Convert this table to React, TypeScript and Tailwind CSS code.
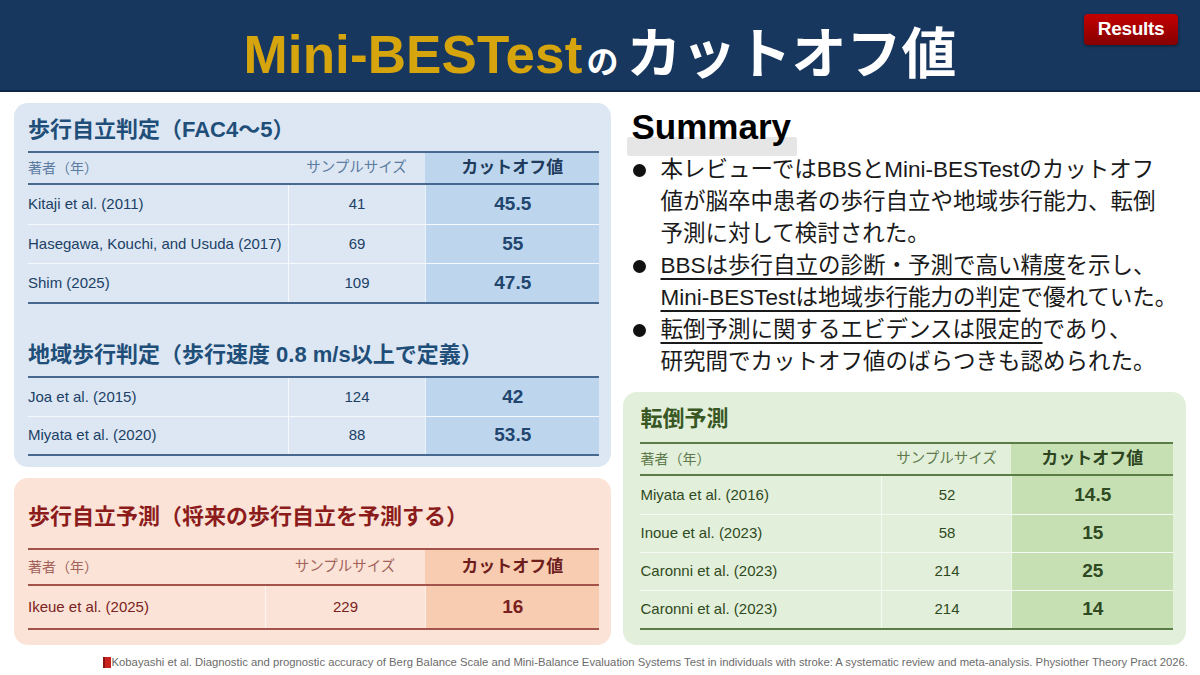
import React from 'react';

type Theme = {
  border: string;
  cut: string;
  text: string;
  head: string;
  headCut: string;
  val: string;
};

const BLUE: Theme = {
  border: 'border-[#47698f]',
  cut: 'bg-[#bdd6ee]',
  text: 'text-[#203f66]',
  head: 'text-[#5b7ba1]',
  headCut: 'text-[#1e3a5c]',
  val: 'text-[#22456e]',
};

const ORANGE: Theme = {
  border: 'border-[#a3534a]',
  cut: 'bg-[#f8ccb0]',
  text: 'text-[#7a2222]',
  head: 'text-[#a2625a]',
  headCut: 'text-[#6e1d1d]',
  val: 'text-[#7a1f1f]',
};

const GREEN: Theme = {
  border: 'border-[#5a7d45]',
  cut: 'bg-[#c6e0b4]',
  text: 'text-[#2f4a22]',
  head: 'text-[#5e7a4c]',
  headCut: 'text-[#2c4420]',
  val: 'text-[#2f4a22]',
};

const FONT = { fontFamily: '"Liberation Sans", "Noto Sans CJK JP", sans-serif' };
const JP = { fontFamily: '"Noto Sans CJK JP", sans-serif' };

type Row = [string, string, string];

interface TableProps {
  theme: Theme;
  widths: [string, string];
  header?: boolean;
  headH?: string;
  rowH: string;
  rows: Row[];
}

const DataTable: React.FC<TableProps> = ({ theme, widths, header, headH, rowH, rows }) => (
  <div className={`border-t-2 border-b-2 ${theme.border}`} style={FONT}>
    {header && (
      <div className={`flex ${headH} border-b-2 ${theme.border}`}>
        <div className={`${widths[0]} flex items-center text-[14px] ${theme.head}`}>著者（年）</div>
        <div className={`${widths[1]} flex items-center justify-center text-[14.5px] ${theme.head}`}>サンプルサイズ</div>
        <div className={`flex-1 flex items-center justify-center ${theme.cut} text-[17px] font-bold ${theme.headCut}`}>カットオフ値</div>
      </div>
    )}
    {rows.map((r, i) => (
      <div key={i} className={`flex ${rowH} ${i > 0 ? 'border-t border-white/70' : ''}`}>
        <div className={`${widths[0]} flex items-center text-[15px] ${theme.text}`}>{r[0]}</div>
        <div className={`${widths[1]} flex items-center justify-center border-l border-white/70 text-[15px] ${theme.text}`}>{r[1]}</div>
        <div className={`flex-1 flex items-center justify-center border-l border-white/70 ${theme.cut} text-[19px] font-bold ${theme.val}`}>{r[2]}</div>
      </div>
    ))}
  </div>
);

const Bullet: React.FC<{ children: React.ReactNode }> = ({ children }) => (
  <li className="flex">
    <div className="w-[37px] h-[32px] flex items-center pl-[10px] shrink-0">
      <div className="w-[13px] h-[13px] rounded-full bg-[#111]" />
    </div>
    <div className="whitespace-nowrap">{children}</div>
  </li>
);

const U: React.FC<{ children: React.ReactNode }> = ({ children }) => (
  <span className="underline decoration-[1.5px] underline-offset-[5px]">{children}</span>
);

export default function App() {
  return (
    <div className="w-[1200px] h-[675px] bg-white overflow-hidden relative" style={FONT}>
      {/* Header */}
      <header className="relative h-[92px] bg-[#17375e] border-b-2 border-[#0e2646] flex items-center justify-center">
        <h1 className="flex items-baseline pt-[12px] leading-none">
          <span className="text-[53px] font-bold text-[#d6a40c] tracking-[0.1px]" style={{ fontFamily: '"Liberation Sans", sans-serif' }}>
            Mini-BESTest
          </span>
          <span className="text-[32px] font-bold text-white ml-[4px]" style={JP}>の</span>
          <span className="text-[55px] font-bold text-white ml-[8px]" style={JP}>カットオフ値</span>
        </h1>
        <div className="absolute right-[22px] top-[14px] w-[94px] h-[31px] rounded-[4px] bg-gradient-to-b from-[#c40000] to-[#850000] shadow-[0_1px_3px_rgba(0,0,0,0.5)] flex items-center justify-center">
          <span className="text-[19px] font-bold text-white tracking-[-0.3px]">Results</span>
        </div>
      </header>

      {/* Body */}
      <div className="flex px-[14px] pt-[11px] gap-[12px]">
        {/* Left column */}
        <div className="w-[598px] flex flex-col gap-[11px]">
          <section className="h-[364px] rounded-[14px] bg-[#dce7f3] pl-[14px] pr-[12px] pt-[11px]">
            <h2 className="h-[32px] leading-[32px] text-[22px] font-bold text-[#1f4e79] mb-[5px]">歩行自立判定（FAC4〜5）</h2>
            <DataTable
              theme={BLUE}
              widths={['w-[260px]', 'w-[137px]']}
              header
              headH="h-[32px]"
              rowH="h-[39px]"
              rows={[
                ['Kitaji et al. (2011)', '41', '45.5'],
                ['Hasegawa, Kouchi, and Usuda (2017)', '69', '55'],
                ['Shim (2025)', '109', '47.5'],
              ]}
            />
            <h2 className="h-[32px] leading-[32px] text-[22px] font-bold text-[#1f4e79] mt-[35px] mb-[5px]">
              地域歩行判定（歩行速度 0.8 m/s以上で定義）
            </h2>
            <DataTable
              theme={BLUE}
              widths={['w-[260px]', 'w-[137px]']}
              rowH="h-[38px]"
              rows={[
                ['Joa et al. (2015)', '124', '42'],
                ['Miyata et al. (2020)', '88', '53.5'],
              ]}
            />
          </section>

          <section className="h-[167px] rounded-[14px] bg-[#fbe4d7] pl-[14px] pr-[12px] pt-[23px]">
            <h2 className="h-[32px] leading-[32px] text-[22px] font-bold text-[#8c1c1c] mb-[15px]">
              歩行自立予測（将来の歩行自立を予測する）
            </h2>
            <DataTable
              theme={ORANGE}
              widths={['w-[237px]', 'w-[160px]']}
              header
              headH="h-[36px]"
              rowH="h-[42px]"
              rows={[['Ikeue et al. (2025)', '229', '16']]}
            />
          </section>
        </div>

        {/* Right column */}
        <div className="w-[563px] flex flex-col">
          <div className="h-[51px] pl-[8px] flex items-end">
            <h2 className="relative inline-block text-[35px] font-bold leading-[44px] text-black mb-[5px]">
              <span className="absolute left-[-4px] right-[-6px] bottom-[-7px] h-[19px] bg-[#e6e6e6] rounded-[2px]" />
              <span className="relative">Summary</span>
            </h2>
          </div>
          <ul className="text-[22.5px] leading-[32px] text-[#1a1a1a]">
            <Bullet>
              本レビューではBBSとMini-BESTestのカットオフ<br />
              値が脳卒中患者の歩行自立や地域歩行能力、転倒<br />
              予測に対して検討された。
            </Bullet>
            <Bullet>
              <U>BBSは歩行自立の診断・予測で高い精度</U>を示し、<br />
              <U>Mini-BESTestは地域歩行能力の判定</U>で優れていた。
            </Bullet>
            <Bullet>
              <U>転倒予測に関するエビデンスは限定的</U>であり、<br />
              研究間でカットオフ値のばらつきも認められた。
            </Bullet>
          </ul>

          <section className="mt-[14px] h-[253px] rounded-[14px] bg-[#e2efda] pl-[17px] pr-[13px] pt-[11px]">
            <h2 className="h-[32px] leading-[32px] text-[22px] font-bold text-[#385723] mb-[7px]">転倒予測</h2>
            <DataTable
              theme={GREEN}
              widths={['w-[241px]', 'w-[130px]']}
              header
              headH="h-[32px]"
              rowH="h-[38px]"
              rows={[
                ['Miyata et al. (2016)', '52', '14.5'],
                ['Inoue et al. (2023)', '58', '15'],
                ['Caronni et al. (2023)', '214', '25'],
                ['Caronni et al. (2023)', '214', '14'],
              ]}
            />
          </section>
        </div>
      </div>

      {/* Footer reference */}
      <div className="mt-[9px] pr-[12px] flex justify-end items-center whitespace-nowrap text-[11.3px] text-[#6b6b6b]">
        <svg width="8" height="11" viewBox="0 0 8 11" className="mr-[1px]">
          <rect x="0" y="0" width="8" height="11" fill="#c9211e" />
          <rect x="0" y="0" width="2" height="11" fill="#8e1512" />
        </svg>
        <span>
          Kobayashi et al. Diagnostic and prognostic accuracy of Berg Balance Scale and Mini-Balance Evaluation Systems Test in individuals with stroke: A systematic review and meta-analysis. Physiother Theory Pract 2026.
        </span>
      </div>
    </div>
  );
}
